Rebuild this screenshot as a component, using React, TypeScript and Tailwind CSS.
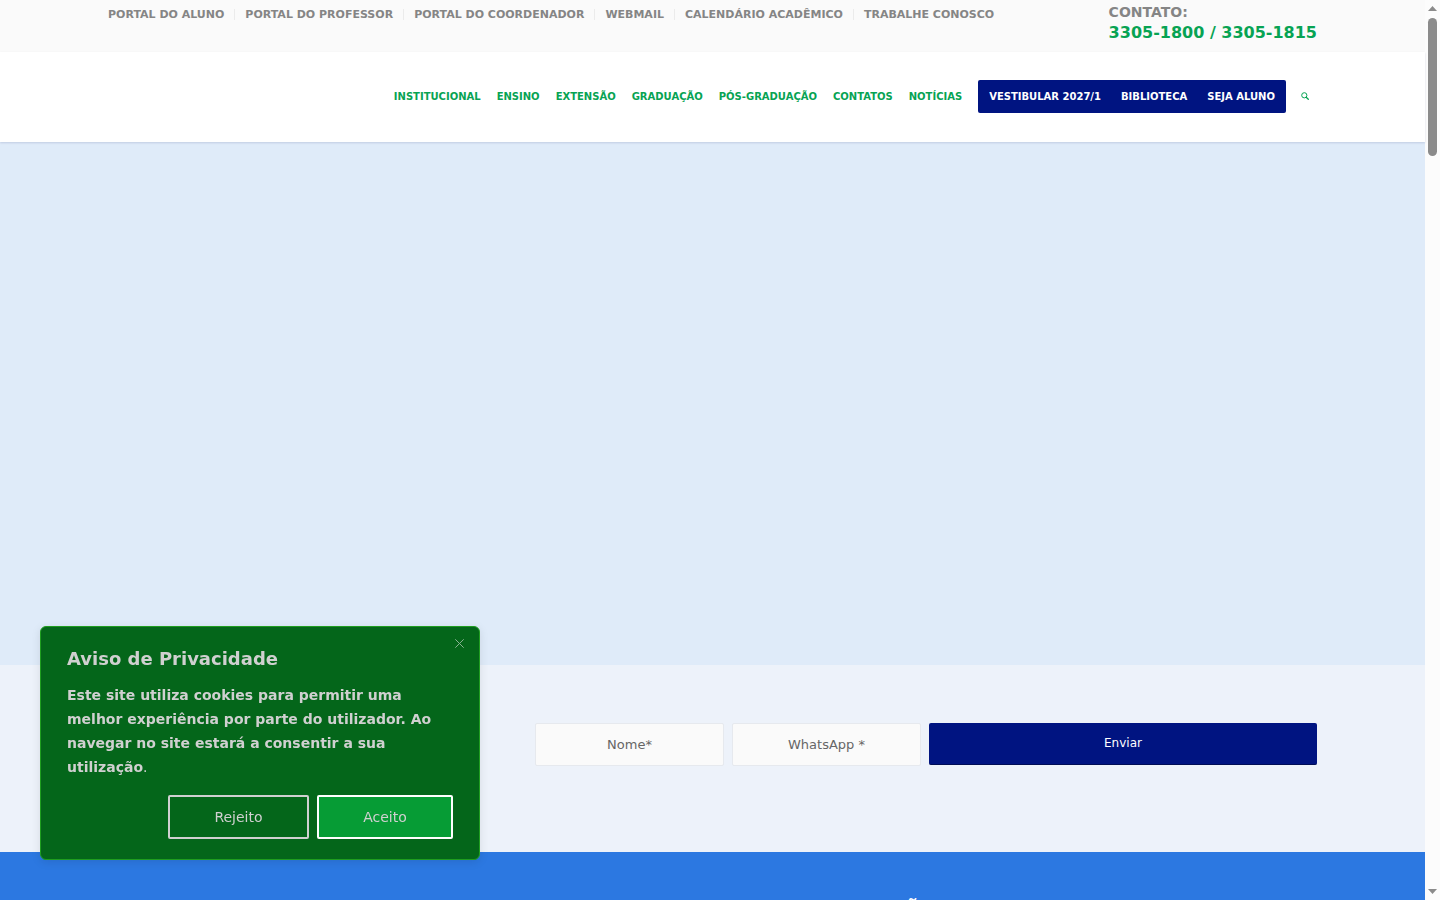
import { FormEvent, useState } from "react";

const portalLinks = [
  "PORTAL DO ALUNO",
  "PORTAL DO PROFESSOR",
  "PORTAL DO COORDENADOR",
  "WEBMAIL",
  "CALENDÁRIO ACADÊMICO",
  "TRABALHE CONOSCO",
];

const menuLinks = [
  "INSTITUCIONAL",
  "ENSINO",
  "EXTENSÃO",
  "GRADUAÇÃO",
  "PÓS-GRADUAÇÃO",
  "CONTATOS",
  "NOTÍCIAS",
];

const featuredLinks = ["VESTIBULAR 2027/1", "BIBLIOTECA", "SEJA ALUNO"];

function TopBar() {
  return (
    <div className="h-[52px] bg-[#fafafa]">
      <div className="mx-auto flex max-w-[1309px] items-start justify-between px-[50px]">
        <nav aria-label="Portais" className="pt-[9px]">
          <ul className="flex text-[11px] leading-[11px] font-bold text-[#858585]">
            {portalLinks.map((label) => (
              <li
                key={label}
                className="border-l border-[#ebebeb] px-[10px] first:border-l-0 first:pl-0"
              >
                <a href="#">{label}</a>
              </li>
            ))}
          </ul>
        </nav>
        <div className="pt-[2px] font-bold">
          <p className="text-[14px] leading-5 text-[#858585]">CONTATO:</p>
          <p className="text-[16px] leading-[22px] text-[#07a353]">
            3305-1800 / 3305-1815
          </p>
        </div>
      </div>
    </div>
  );
}

function Header() {
  return (
    <header className="relative z-10 h-[90px] bg-white shadow-[0_1px_2px_rgba(0,20,90,0.14)]">
      <nav
        aria-label="Principal"
        className="mx-auto flex h-full max-w-[1309px] items-center justify-end px-[50px] pb-[2px] text-[10px] font-bold"
      >
        <ul className="flex gap-4 pr-4 text-[#07a353]">
          {menuLinks.map((label) => (
            <li key={label}>
              <a href="#">{label}</a>
            </li>
          ))}
        </ul>
        <ul className="flex h-[33px] items-center gap-5 rounded-[2px] bg-[#001481] px-[11px] text-white">
          {featuredLinks.map((label) => (
            <li key={label}>
              <a href="#">{label}</a>
            </li>
          ))}
        </ul>
        <button
          type="button"
          aria-label="Buscar"
          className="mr-2 ml-[15px] text-[#07a353]"
        >
          <svg width="8" height="8" viewBox="0 0 8 8" fill="none" stroke="currentColor">
            <circle cx="3.3" cy="3.3" r="2.6" strokeWidth="1" />
            <path d="M5.2 5.2 7.3 7.3" strokeWidth="1.3" strokeLinecap="round" />
          </svg>
        </button>
      </nav>
    </header>
  );
}

function ContactForm() {
  const [name, setName] = useState("");
  const [phone, setPhone] = useState("");

  const handleSubmit = (e: FormEvent) => {
    e.preventDefault();
  };

  const inputClass =
    "h-[43px] min-w-0 flex-1 rounded-[2px] border border-[#e6e9ee] bg-[#fafafa] text-center text-[13px] text-[#666666] placeholder:text-[#666666]";

  return (
    <section className="h-[187px] bg-[#edf2fa]">
      <div className="mx-auto flex max-w-[1309px] justify-end px-[50px] pt-[58px]">
        <form className="flex w-[782px] items-start gap-2" onSubmit={handleSubmit}>
          <input
            type="text"
            aria-label="Nome"
            placeholder="Nome*"
            value={name}
            onChange={(e) => setName(e.target.value)}
            className={inputClass}
          />
          <input
            type="tel"
            aria-label="WhatsApp"
            placeholder="WhatsApp *"
            value={phone}
            onChange={(e) => setPhone(e.target.value)}
            className={inputClass}
          />
          <button
            type="submit"
            className="h-[42px] w-[388px] rounded-[2px] border-b border-[#000d55] bg-[#001481] pb-[2px] text-[12px] text-white"
          >
            Enviar
          </button>
        </form>
      </div>
    </section>
  );
}

function CookieNotice() {
  const [open, setOpen] = useState(true);
  const close = () => setOpen(false);

  if (!open) return null;

  return (
    <div
      role="dialog"
      aria-labelledby="cookie-title"
      className="fixed bottom-10 left-10 z-20 w-[440px] rounded-[6px] border border-[#1f9d1f] bg-[#04661a] px-[26px] py-5 text-[#d0d0d0] shadow-[0_2px_10px_rgba(0,0,0,0.1)]"
    >
      <button
        type="button"
        aria-label="Fechar"
        onClick={close}
        className="absolute top-3 right-[15px] text-[#8ab493]"
      >
        <svg width="9" height="9" viewBox="0 0 9 9" stroke="currentColor">
          <path d="M0.3 0.3 8.7 8.7M8.7 0.3 0.3 8.7" strokeWidth="1" />
        </svg>
      </button>
      <h2 id="cookie-title" className="mb-3 text-[18px] leading-6 font-bold">
        Aviso de Privacidade
      </h2>
      <p className="text-[14px] leading-6">
        <strong>
          Este site utiliza cookies para permitir uma melhor experiência por
          parte do utilizador. Ao navegar no site estará a consentir a sua
          utilização
        </strong>
        .
      </p>
      <div className="mt-4 flex justify-end gap-2 text-[14px]">
        <button
          type="button"
          onClick={close}
          className="h-11 w-[141px] rounded-[2px] border-2 border-[#d0d0d0]"
        >
          Rejeito
        </button>
        <button
          type="button"
          onClick={close}
          className="h-11 w-[136px] rounded-[2px] border-2 border-white bg-[#069c35]"
        >
          Aceito
        </button>
      </div>
    </div>
  );
}

function ScrollRail() {
  return (
    <div
      aria-hidden="true"
      className="flex w-[15px] shrink-0 flex-col items-center justify-between bg-[#fcfcfc] py-[6px]"
    >
      <div className="flex flex-col items-center gap-[7px]">
        <svg width="9" height="5" viewBox="0 0 9 5" fill="#8b8b8b">
          <path d="M4.5 0 9 5H0Z" />
        </svg>
        <div className="h-[138px] w-[9px] rounded-full bg-[#8b8b8b]" />
      </div>
      <svg width="9" height="5" viewBox="0 0 9 5" fill="#8b8b8b">
        <path d="M4.5 5 9 0H0Z" />
      </svg>
    </div>
  );
}

export default function App() {
  return (
    <div className="flex h-screen overflow-hidden font-['DejaVu_Sans',sans-serif]">
      <div className="flex min-w-0 flex-1 flex-col">
        <TopBar />
        <Header />
        <main className="flex flex-1 flex-col">
          <section className="flex-1 bg-[#dfebf9]" />
          <ContactForm />
          <section className="h-12 overflow-hidden bg-[#2c78e1]">
            <p className="pt-[45px] pl-[400px] text-center text-[22px] leading-7 font-bold text-white">
              Ã
            </p>
          </section>
        </main>
      </div>
      <ScrollRail />
      <CookieNotice />
    </div>
  );
}
